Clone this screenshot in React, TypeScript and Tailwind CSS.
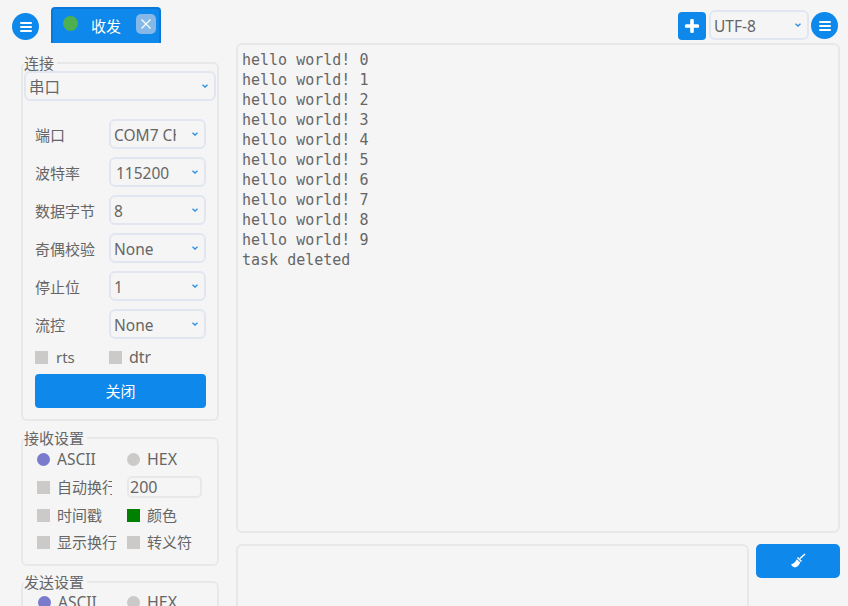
const uiFont = "font-['Noto_Sans','Noto_Sans_CJK_SC',sans-serif]";

const lines = [
  "hello world! 0",
  "hello world! 1",
  "hello world! 2",
  "hello world! 3",
  "hello world! 4",
  "hello world! 5",
  "hello world! 6",
  "hello world! 7",
  "hello world! 8",
  "hello world! 9",
  "task deleted",
];

const serial = [
  { label: "端口", value: "COM7 CH340", pad: "pl-[3px]" },
  { label: "波特率", value: "115200", pad: "pl-[5px]" },
  { label: "数据字节", value: "8", pad: "pl-[3px]" },
  { label: "奇偶校验", value: "None", pad: "pl-[3px]" },
  { label: "停止位", value: "1", pad: "pl-[3px]" },
  { label: "流控", value: "None", pad: "pl-[3px]" },
];

function Chevron() {
  return (
    <svg width="6" height="4" viewBox="0 0 6 4" className="shrink-0">
      <path d="M0.5 0.7 L3 3 L5.5 0.7" fill="none" stroke="#2d8fe6" strokeWidth="1.3" />
    </svg>
  );
}

function MenuButton() {
  return (
    <button className="w-[27px] h-[27px] rounded-full bg-[#0f88eb] flex flex-col items-center justify-center gap-[2px] shrink-0">
      <span className="w-[12px] h-[2px] rounded-sm bg-white" />
      <span className="w-[12px] h-[2px] rounded-sm bg-white" />
      <span className="w-[12px] h-[2px] rounded-sm bg-white" />
    </button>
  );
}

function Select({ value, className, pad }: { value: string; className: string; pad: string }) {
  return (
    <div
      className={`h-[30px] border-2 border-[#e1e6f0] rounded-[6px] flex items-center justify-between pr-[6px] text-[15.5px] text-[#666] ${pad} ${className}`}
    >
      <span className="pt-[4px] overflow-hidden whitespace-nowrap max-w-[62px]">{value}</span>
      <Chevron />
    </div>
  );
}

function Box({ color = "bg-[#ccc9c9]" }: { color?: string }) {
  return <span className={`block w-[13px] h-[13px] shrink-0 ${color}`} />;
}

function Dot({ color }: { color: string }) {
  return <span className={`block w-[13px] h-[13px] rounded-full shrink-0 ${color}`} />;
}

function Group({ title, className, children }: { title: string; className: string; children: React.ReactNode }) {
  return (
    <fieldset className={`border-2 border-[#e8e8e8] rounded-[6px] w-[198px] ${className}`}>
      <legend className="ml-[1px] pr-[3px] text-[15px] leading-[20px] text-[#666]">{title}</legend>
      {children}
    </fieldset>
  );
}

function Option({
  control,
  text,
  gap,
  width,
  size = "text-[15px]",
}: {
  control: React.ReactNode;
  text: string;
  gap: string;
  width: string;
  size?: string;
}) {
  return (
    <div className={`flex items-center shrink-0 ${gap} ${width}`}>
      {control}
      <span className={`leading-[20px] text-[#666] whitespace-nowrap overflow-hidden ${size}`}>{text}</span>
    </div>
  );
}

export default function App() {
  return (
    <div className={`w-[848px] h-[606px] overflow-hidden bg-[#f5f5f5] ${uiFont}`}>
      <header className="h-[43px] flex items-start">
        <div className="ml-[12px] mt-[13px]">
          <MenuButton />
        </div>
        <div className="ml-[12px] mt-[7px] w-[110px] h-[36px] bg-[#0f88eb] border-t-2 border-x-2 border-[#0a78d8] rounded-t-[4px] flex items-center text-white">
          <span className="ml-[10px] w-[15px] h-[15px] rounded-full bg-[#4caf50] -mt-[5px]" />
          <span className="ml-[13px] text-[15px] leading-[20px]">收发</span>
          <span className="ml-[15px] -mt-[5px] w-[20px] h-[20px] rounded-[5px] bg-[#85b8e6] flex items-center justify-center">
            <svg width="10" height="10" viewBox="0 0 10 10">
              <path d="M0.5 0.5 L9.5 9.5 M9.5 0.5 L0.5 9.5" stroke="#fff" strokeWidth="1.1" />
            </svg>
          </span>
        </div>
        <div className="ml-auto flex items-start">
          <button className="mt-[12px] w-[28px] h-[28px] rounded-[4px] bg-[#0f88eb] flex items-center justify-center">
            <svg width="14" height="14" viewBox="0 0 14 14">
              <path d="M7 1.5 V12.5 M1.5 7 H12.5" stroke="#fff" strokeWidth="3.6" strokeLinecap="round" />
            </svg>
          </button>
          <div className="ml-[3px] mt-[10px]">
            <Select value="UTF-8" className="w-[100px]" pad="pl-[3px]" />
          </div>
          <div className="ml-[2px] mr-[10px] mt-[12px]">
            <MenuButton />
          </div>
        </div>
      </header>

      <main className="flex">
        <aside className="w-[236px] pl-[21px] shrink-0">
          <Group title="连接" className="h-[368px] mt-[10px]">
            <Select value="串口" className="w-[192px] ml-[1px] -mt-[2px]" pad="pl-[3px]" />
            <div className="mt-[18px] ml-[12px] flex flex-col gap-[8px]">
              {serial.map((row) => (
                <div key={row.label} className="flex items-center">
                  <span className="w-[74px] pt-[3px] text-[15px] text-[#666]">{row.label}</span>
                  <Select value={row.value} className="w-[97px]" pad={row.pad} />
                </div>
              ))}
            </div>
            <div className="mt-[8px] ml-[12px] flex items-center h-[20px]">
              <Option control={<Box />} text="rts" gap="gap-[8px]" width="w-[74px]" />
              <Option control={<Box />} text="dtr" gap="gap-[7px]" width="w-[60px]" size="text-[16px]" />
            </div>
            <button className="mt-[7px] ml-[12px] w-[171px] h-[34px] rounded-[4px] bg-[#0f88eb] text-white text-[15px]">
              关闭
            </button>
          </Group>

          <Group title="接收设置" className="h-[138px] mt-[7px]">
            <div className="ml-[14px] mt-[1px] flex flex-col">
              <div className="flex items-center h-[20px]">
                <Option control={<Dot color="bg-[#7b7bcd]" />} text="ASCII" gap="gap-[7px]" width="w-[90px]" size="text-[15.5px]" />
                <Option control={<Dot color="bg-[#ccc9c9]" />} text="HEX" gap="gap-[7px]" width="w-[60px]" size="text-[16px]" />
              </div>
              <div className="flex items-center h-[22px] mt-[7px]">
                <Option control={<Box />} text="自动换行" gap="gap-[7px]" width="w-[75px]" />
                <span className="ml-[15px] w-[75px] h-[22px] border-2 border-[#e8e8e8] rounded-[5px] pl-[1px] text-[16px] leading-[18px] text-[#666]">
                  200
                </span>
              </div>
              <div className="flex items-center h-[20px] mt-[7px]">
                <Option control={<Box />} text="时间戳" gap="gap-[7px]" width="w-[90px]" />
                <Option control={<Box color="bg-[#008000]" />} text="颜色" gap="gap-[7px]" width="w-[60px]" />
              </div>
              <div className="flex items-center h-[20px] mt-[7px]">
                <Option control={<Box />} text="显示换行" gap="gap-[7px]" width="w-[90px]" />
                <Option control={<Box />} text="转义符" gap="gap-[7px]" width="w-[70px]" />
              </div>
            </div>
          </Group>

          <Group title="发送设置" className="h-[60px] mt-[6px]">
            <div className="ml-[15px] flex items-center h-[20px]">
              <Option control={<Dot color="bg-[#7b7bcd]" />} text="ASCII" gap="gap-[7px]" width="w-[89px]" size="text-[15.5px]" />
              <Option control={<Dot color="bg-[#ccc9c9]" />} text="HEX" gap="gap-[7px]" width="w-[60px]" size="text-[16px]" />
            </div>
          </Group>
        </aside>

        <section className="w-[604px] flex flex-col">
          <div className="h-[490px] border-2 border-[#e8e8e8] rounded-[6px] pl-[4px] pt-[5px] font-['DejaVu_Sans_Mono',monospace] text-[15px] leading-[20px] text-[#666]">
            {lines.map((line) => (
              <div key={line}>{line}</div>
            ))}
          </div>
          <div className="mt-[11px] flex">
            <div className="w-[513px] h-[100px] border-2 border-[#e8e8e8] rounded-[6px]" />
            <button className="ml-[7px] w-[84px] h-[34px] rounded-[5px] bg-[#0f88eb] flex items-center justify-center">
              <svg width="16" height="16" viewBox="0 0 16 16">
                <path d="M15 1 L10 5.5" stroke="#fff" strokeWidth="1.5" fill="none" />
                <path d="M7.5 4.5 L11.5 8.5" stroke="#fff" strokeWidth="1.6" fill="none" />
                <path d="M6.8 6.2 L10.2 9.6 Q8.8 13.6 5 14.4 Q2.2 13.8 1 11.4 Q4.6 10.4 6.8 6.2 Z" fill="#fff" />
              </svg>
            </button>
          </div>
        </section>
      </main>
    </div>
  );
}
